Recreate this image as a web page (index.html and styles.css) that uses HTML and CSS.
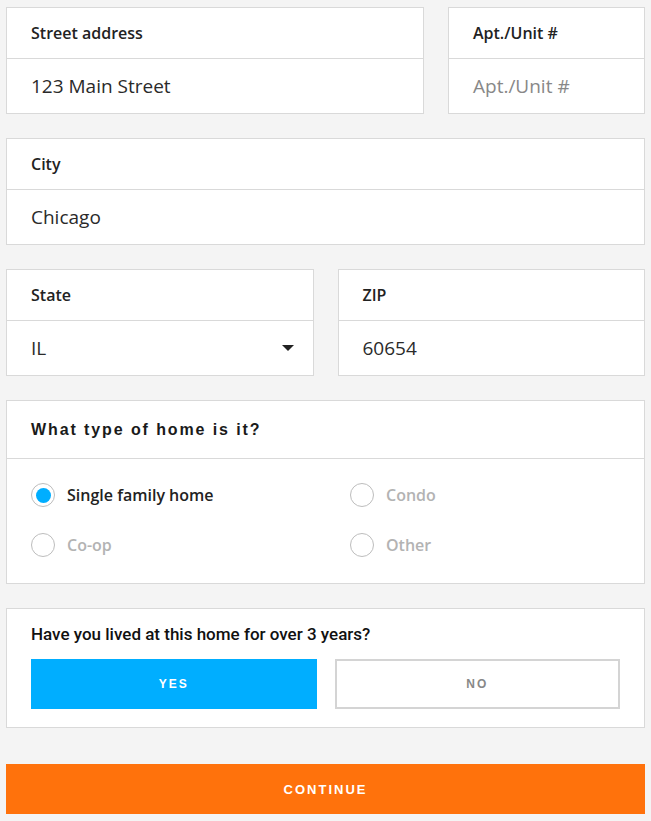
FILE: index.html
```html
<!DOCTYPE html>
<html lang="en">
<head>
  <meta charset="UTF-8" />
  <meta name="viewport" content="width=device-width, initial-scale=1.0" />
  <title>Home details</title>
  <link rel="stylesheet" href="styles.css">
</head>
<body>
  <form class="form">
    <div class="row row-street">
      <div class="field">
        <div class="field-label">Street address</div>
        <div class="field-input">123 Main Street</div>
      </div>
      <div class="field">
        <div class="field-label">Apt./Unit #</div>
        <div class="field-input placeholder">Apt./Unit #</div>
      </div>
    </div>

    <div class="row">
      <div class="field">
        <div class="field-label">City</div>
        <div class="field-input">Chicago</div>
      </div>
    </div>

    <div class="row row-half">
      <div class="field">
        <div class="field-label">State</div>
        <div class="field-input select">IL <span class="caret"></span></div>
      </div>
      <div class="field">
        <div class="field-label">ZIP</div>
        <div class="field-input">60654</div>
      </div>
    </div>

    <div class="row">
      <div class="field">
        <div class="section-title">What type of home is it?</div>
        <div class="radios">
          <label class="radio checked"><span class="dot"></span>Single family home</label>
          <label class="radio"><span class="dot"></span>Condo</label>
          <label class="radio"><span class="dot"></span>Co-op</label>
          <label class="radio"><span class="dot"></span>Other</label>
        </div>
      </div>
    </div>

    <div class="field question">
      <div class="question-text">Have you lived at this home for over 3 years?</div>
      <div class="choices">
        <div class="choice active">YES</div>
        <div class="choice">NO</div>
      </div>
    </div>

    <div class="button-continue">CONTINUE</div>
  </form>
</body>
</html>
```

FILE: styles.css
```css
body {
  background-color: #f4f4f4;
  color: #222;
  font-family: "Open Sans", sans-serif;
  margin: 0;
  padding: 7px 6px;
}
.row {
  display: grid;
  gap: 24px;
  margin-bottom: 24px;
}
.row-street {
  grid-template-columns: 1fr 197px;
}
.row-half {
  grid-template-columns: 1fr 1fr;
}
.field {
  background-color: #fff;
  border: 1px solid #d9d9d9;
}
.field-label {
  height: 50px;
  padding: 0 24px;
  display: flex;
  align-items: center;
  border-bottom: 1px solid #d9d9d9;
  font-size: 16px;
  font-weight: 600;
  color: #222;
}
.field-input {
  height: 54px;
  padding: 0 24px;
  display: flex;
  align-items: center;
  font-size: 19px;
  color: #2a2a2a;
}
.placeholder {
  color: #888;
}
.select {
  justify-content: space-between;
}
.caret {
  width: 0;
  height: 0;
  border-left: 6px solid transparent;
  border-right: 6px solid transparent;
  border-top: 6px solid #222;
  margin-right: -5px;
}
.section-title {
  height: 57px;
  padding: 0 24px;
  display: flex;
  align-items: center;
  border-bottom: 1px solid #d9d9d9;
  font-family: "Liberation Sans", Arial, sans-serif;
  font-size: 16px;
  font-weight: bold;
  letter-spacing: 1.9px;
  color: #1a1a1a;
}
.radios {
  display: grid;
  grid-template-columns: 319px 1fr;
  row-gap: 26px;
  padding: 24px 24px 26px;
}
.radio {
  display: flex;
  align-items: center;
  gap: 12px;
  height: 24px;
  font-size: 16px;
  font-weight: 600;
  color: #b3b3b3;
}
.radio .dot {
  box-sizing: border-box;
  width: 24px;
  height: 24px;
  border: 1px solid #bdbdbd;
  border-radius: 50%;
  display: flex;
  align-items: center;
  justify-content: center;
}
.radio.checked {
  color: #222;
}
.radio.checked .dot::after {
  content: "";
  width: 15px;
  height: 15px;
  border-radius: 50%;
  background-color: #00aeff;
}
.question {
  padding: 14px 24px 18px;
}
.question-text {
  font-family: Roboto, sans-serif;
  font-size: 17px;
  font-weight: 500;
  line-height: 22px;
  margin-bottom: 14px;
  color: #111;
}
.choices {
  display: grid;
  grid-template-columns: 1fr 1fr;
  gap: 18px;
}
.choice {
  box-sizing: border-box;
  height: 50px;
  display: flex;
  align-items: center;
  justify-content: center;
  border: 2px solid #d4d4d4;
  font-family: "Liberation Sans", Arial, sans-serif;
  font-size: 12px;
  font-weight: bold;
  letter-spacing: 2px;
  color: #888;
}
.choice.active {
  background-color: #00aeff;
  border-color: #00aeff;
  color: #fff;
}
.button-continue {
  margin-top: 36px;
  height: 50px;
  display: flex;
  align-items: center;
  justify-content: center;
  background-color: #ff720c;
  color: #fff;
  font-family: "Liberation Sans", Arial, sans-serif;
  font-size: 13px;
  font-weight: bold;
  letter-spacing: 2px;
}
```
